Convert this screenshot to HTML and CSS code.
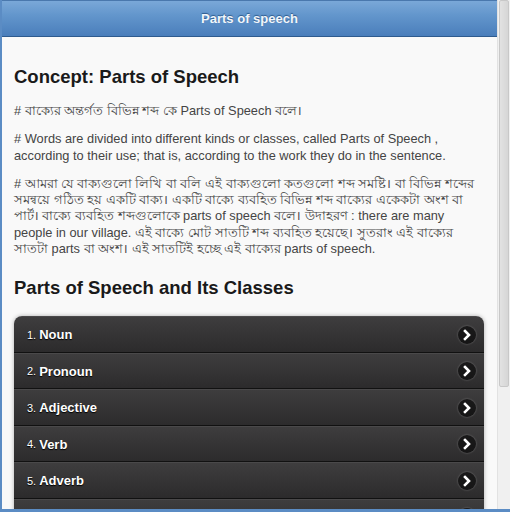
FILE: index.html
```html
<!DOCTYPE html>
<html lang="bn">
<head>
    <meta charset="UTF-8">
    <meta name="viewport" content="width=device-width, initial-scale=1.0">
    <title>Parts of speech</title>
    <link rel="stylesheet" href="styles.css">
</head>
<body>
    <div class="device">
        <div class="page">
            <header class="header">
                <h1>Parts of speech</h1>
            </header>

            <div class="content">
                <h2>Concept: Parts of Speech</h2>
                <p># বাক্যের অন্তর্গত বিভিন্ন শব্দ কে Parts of Speech বলে।</p>
                <p># Words are divided into different kinds or classes, called Parts of Speech , according to their use; that is, according to the work they do in the sentence.</p>
                <p># আমরা যে বাক্যগুলো লিখি বা বলি এই বাক্যগুলো কতগুলো শব্দ সমষ্টি। বা বিভিন্ন শব্দের সমন্বয়ে গঠিত হয় একটি বাক্য। একটি বাক্যে ব্যবহিত বিভিন্ন শব্দ বাক্যের একেকটা অংশ বা পার্ট। বাক্যে ব্যবহিত শব্দগুলোকে parts of speech বলে। উদাহরণ : there are many people in our village. এই বাক্যে মোট সাতটি শব্দ ব্যবহিত হয়েছে। সুতরাং এই বাক্যের সাতটা parts বা অংশ। এই সাতটিই হচ্ছে এই বাক্যের parts of speech.</p>

                <h2 class="section-title">Parts of Speech and Its Classes</h2>

                <ul class="list">
                    <li><span class="num">1.</span> Noun<span class="arrow"><svg viewBox="0 0 18 18" width="18" height="18"><path d="M7 5 L11 9 L7 13" fill="none" stroke="#fff" stroke-width="2.6" stroke-linecap="square"/></svg></span></li>
                    <li><span class="num">2.</span> Pronoun<span class="arrow"><svg viewBox="0 0 18 18" width="18" height="18"><path d="M7 5 L11 9 L7 13" fill="none" stroke="#fff" stroke-width="2.6" stroke-linecap="square"/></svg></span></li>
                    <li><span class="num">3.</span> Adjective<span class="arrow"><svg viewBox="0 0 18 18" width="18" height="18"><path d="M7 5 L11 9 L7 13" fill="none" stroke="#fff" stroke-width="2.6" stroke-linecap="square"/></svg></span></li>
                    <li><span class="num">4.</span> Verb<span class="arrow"><svg viewBox="0 0 18 18" width="18" height="18"><path d="M7 5 L11 9 L7 13" fill="none" stroke="#fff" stroke-width="2.6" stroke-linecap="square"/></svg></span></li>
                    <li><span class="num">5.</span> Adverb<span class="arrow"><svg viewBox="0 0 18 18" width="18" height="18"><path d="M7 5 L11 9 L7 13" fill="none" stroke="#fff" stroke-width="2.6" stroke-linecap="square"/></svg></span></li>
                    <li><span class="num">6.</span> Preposition<span class="arrow"><svg viewBox="0 0 18 18" width="18" height="18"><path d="M7 5 L11 9 L7 13" fill="none" stroke="#fff" stroke-width="2.6" stroke-linecap="square"/></svg></span></li>
                </ul>
            </div>
        </div>

        <div class="scrollbar">
            <div class="thumb"></div>
        </div>
    </div>
</body>
</html>
```

FILE: styles.css
```css
:root {
    --frame-color: #5b8cc4;
    --text-color: #333;
    --page-bg: #f9f9f9;
}

body {
    font-family: 'Liberation Sans', Arial, 'Noto Sans', sans-serif;
    margin: 0;
    padding: 0;
    overflow: hidden;
    background: #fff;
}

.device {
    display: flex;
    height: 509px;
    border-left: 2px solid var(--frame-color);
    border-bottom: 3px solid var(--frame-color);
}

.page {
    flex: 1;
    background: var(--page-bg);
    overflow: hidden;
}

.header {
    height: 35px;
    background: linear-gradient(#7aa8d8, #6396cc 40%, #4a7ebb);
    border-top: 1px solid #4a78ad;
    border-bottom: 1px solid #2e5b8e;
    display: flex;
    align-items: center;
    justify-content: center;
}

.header h1 {
    margin: 0;
    font-size: 13px;
    font-weight: bold;
    color: #f2f6fb;
    text-shadow: 0 -1px 1px #2c5a8c;
}

.content {
    padding: 29px 13px 0 12px;
    color: var(--text-color);
}

h2 {
    font-size: 18.5px;
    margin: 0 0 15px;
    color: #1a1a1a;
    line-height: 22px;
}

p {
    font-size: 12.8px;
    line-height: 16.3px;
    margin: 0 0 12px;
    color: #444;
}

.section-title {
    margin-top: 20px;
    margin-bottom: 17px;
}

.list {
    list-style: none;
    margin: 0;
    padding: 0;
    border-radius: 8px 8px 0 0;
    overflow: hidden;
    box-shadow: 0 0 4px rgba(0,0,0,0.3);
}

.list li {
    display: flex;
    align-items: center;
    height: 34.5px;
    padding: 0 0 0 13px;
    background: linear-gradient(#3e3d3e, #2c2b2c);
    border-top: 1px solid #4a494a;
    border-bottom: 1px solid #111;
    color: #fff;
    font-size: 13px;
    font-weight: bold;
    text-shadow: 0 1px 1px #000;
}

.list .num {
    font-size: 11px;
    font-weight: normal;
    margin-right: 3px;
}

.arrow {
    margin-left: auto;
    margin-right: 8px;
    width: 18px;
    height: 18px;
    border-radius: 50%;
    background: rgba(0,0,0,0.55);
    box-shadow: 0 0 2px rgba(255,255,255,0.35);
    display: flex;
}

.scrollbar {
    width: 10px;
    background: #f0f0f0;
    border-left: 1px solid #e2e2e2;
    padding: 0 1px;
}

.thumb {
    height: 385px;
    background: linear-gradient(90deg, #e2e2e2, #d6d6d6);
    border: 1px solid #c8c8c8;
    border-radius: 2px;
}
```
